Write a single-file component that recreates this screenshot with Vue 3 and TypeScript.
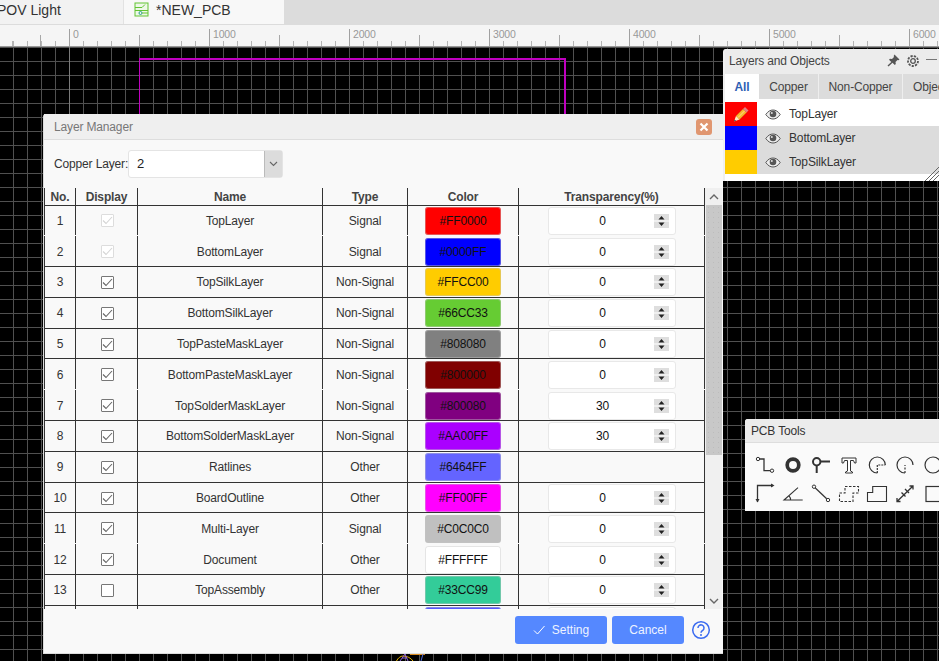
<script setup lang="ts">
interface Row { no: number; name: string; type: string; color: string; on: boolean; off?: boolean; tr: number | null; noline?: boolean; peek?: boolean }
const rows: Row[] = [
  { no: 1, name: 'TopLayer', type: 'Signal', color: '#FF0000', on: true, off: true, tr: 0, noline: true },
  { no: 2, name: 'BottomLayer', type: 'Signal', color: '#0000FF', on: true, off: true, tr: 0 },
  { no: 3, name: 'TopSilkLayer', type: 'Non-Signal', color: '#FFCC00', on: true, tr: 0 },
  { no: 4, name: 'BottomSilkLayer', type: 'Non-Signal', color: '#66CC33', on: true, tr: 0 },
  { no: 5, name: 'TopPasteMaskLayer', type: 'Non-Signal', color: '#808080', on: true, tr: 0 },
  { no: 6, name: 'BottomPasteMaskLayer', type: 'Non-Signal', color: '#800000', on: true, tr: 0, noline: true },
  { no: 7, name: 'TopSolderMaskLayer', type: 'Non-Signal', color: '#800080', on: true, tr: 30 },
  { no: 8, name: 'BottomSolderMaskLayer', type: 'Non-Signal', color: '#AA00FF', on: true, tr: 30 },
  { no: 9, name: 'Ratlines', type: 'Other', color: '#6464FF', on: true, tr: null },
  { no: 10, name: 'BoardOutline', type: 'Other', color: '#FF00FF', on: true, tr: 0 },
  { no: 11, name: 'Multi-Layer', type: 'Signal', color: '#C0C0C0', on: true, tr: 0, noline: true },
  { no: 12, name: 'Document', type: 'Other', color: '#FFFFFF', on: true, tr: 0 },
  { no: 13, name: 'TopAssembly', type: 'Other', color: '#33CC99', on: false, tr: 0 },
  { no: 14, name: '', type: '', color: '#5555FF', on: false, tr: 0, peek: true },
]
const rulerLabels = [0, 1000, 2000, 3000, 4000, 5000, 6000]
const panelLayers = [
  { name: 'TopLayer', color: '#FF0000', active: true },
  { name: 'BottomLayer', color: '#0000FF', active: false },
  { name: 'TopSilkLayer', color: '#FFCC00', active: false },
]
</script>

<template>
  <div class="app">
    <div class="tabs">
      <div class="tab first"><span class="pov">POV Light</span></div>
      <div class="tab second">
        <svg class="pcbicon" width="15" height="15" viewBox="0 0 15 15" fill="none">
          <rect x="1" y="1" width="13" height="13" fill="#eef8e8" stroke="#62c433" />
          <path d="M1 5.500h7l3-3M1 8.500h13" stroke="#62c433" />
          <circle cx="6.500" cy="11" r="1.500" stroke="#2a9d8f" />
          <path d="M8 11h6" stroke="#62c433" />
        </svg>
        <span>*NEW_PCB</span>
      </div>
    </div>
    <div class="ruler">
      <span v-for="(l, i) in rulerLabels" :key="l" class="rlabel" :style="{ left: 69 + i * 140 + 'px' }">{{ l }}</span>
    </div>
    <div class="canvas">
      <div class="origin"></div>
      <div class="outline"></div>
      <svg class="stray" width="40" height="8" viewBox="0 0 40 8" fill="none">
        <path d="M1.500 8C3 5 5.500 3 8 3c4 0 8 2 10 5" stroke="#e5b000" />
        <path d="M5 8l5-7 3 7M7 5h5" stroke="#8a5bd6" />
        <path d="M15 1.500h15" stroke="#d98a1e" />
        <path d="M28 1l-2 7" stroke="#4f6bd8" />
      </svg>

      <section class="dialog">
        <header class="dlg-title">
          <span>Layer Manager</span>
          <button class="close" aria-label="Close">
            <svg width="10" height="10" viewBox="0 0 10 10"><path d="M1.500 1.500l7 7M8.500 1.500l-7 7" stroke="#fff" stroke-width="2.200" /></svg>
          </button>
        </header>
        <div class="copper">
          <label>Copper Layer:</label>
          <div class="select">
            <span class="select-val">2</span>
            <span class="select-btn">
              <svg width="9" height="6" viewBox="0 0 9 6" fill="none"><path d="M1 1l3.500 3.500L8 1" stroke="#666" stroke-width="1.100" /></svg>
            </span>
          </div>
        </div>
        <div class="table-wrap">
          <div class="table">
            <div class="row head">
              <div class="cell">No.</div>
              <div class="cell">Display</div>
              <div class="cell">Name</div>
              <div class="cell">Type</div>
              <div class="cell">Color</div>
              <div class="cell last">Transparency(%)</div>
            </div>
            <div class="body">
              <div v-for="r in rows" :key="r.no" class="row" :class="{ noline: r.noline }">
                <div class="cell"><template v-if="!r.peek">{{ r.no }}</template></div>
                <div class="cell">
                  <span v-if="!r.peek" class="check" :class="{ disabled: r.off }">
                    <svg v-if="r.on" width="11" height="9" viewBox="0 0 11 9" fill="none"><path d="M1 4.500l3 3L10 1" :stroke="r.off ? '#d4d4d4' : '#666'" stroke-width="1.100" /></svg>
                  </span>
                </div>
                <div class="cell">{{ r.name }}</div>
                <div class="cell">{{ r.type }}</div>
                <div class="cell"><span class="swatch" :style="{ background: r.color }"><template v-if="!r.peek">{{ r.color }}</template></span></div>
                <div class="cell last">
                  <span v-if="r.tr !== null" class="num">
                    <template v-if="!r.peek">
                      <span class="num-val">{{ r.tr }}</span>
                      <span class="spin">
                        <svg width="15" height="14" viewBox="0 0 15 14"><rect width="15" height="14" fill="#dedede" /><rect y="6.500" width="15" height="1" fill="#fff" /><path d="M7.500 2l3 3.500h-6zM7.500 12l-3-3.500h6z" fill="#222" /></svg>
                      </span>
                    </template>
                  </span>
                </div>
              </div>
            </div>
          </div>
          <div class="scroll">
            <span class="arrow">
              <svg width="10" height="6" viewBox="0 0 10 6" fill="none"><path d="M1 5l4-4 4 4" stroke="#666" stroke-width="1.400" /></svg>
            </span>
            <div class="track"><div class="thumb"></div></div>
            <span class="arrow">
              <svg width="10" height="6" viewBox="0 0 10 6" fill="none"><path d="M1 1l4 4 4-4" stroke="#666" stroke-width="1.400" /></svg>
            </span>
          </div>
        </div>
        <footer class="dlg-foot">
          <button class="btn setting">
            <svg width="12" height="10" viewBox="0 0 12 10" fill="none"><path d="M1 5.500l3.500 3.500L11.500 1" stroke="#fff" /></svg>
            Setting
          </button>
          <button class="btn cancel">Cancel</button>
          <svg class="help" width="20" height="20" viewBox="0 0 20 20" fill="none">
            <circle cx="10" cy="10" r="8.300" stroke="#3b6bf0" stroke-width="1.500" />
            <path d="M7 8a3 3 0 1 1 4.800 2.300c-1.100.8-1.800 1.200-1.800 2.500" stroke="#3b6bf0" stroke-width="1.500" />
            <circle cx="10" cy="15" r="1" fill="#3b6bf0" />
          </svg>
        </footer>
      </section>

      <section class="panel layers">
        <header class="p-title">
          <span>Layers and Objects</span>
          <span class="p-icons">
            <svg width="13" height="13" viewBox="0 0 13 13"><path d="M7.500.5l5 5-1 .8-1-.3-2 2 .3 2-1 1-2.300-2.300L1.500 12.500.5 11.500l3.800-3.500L2 5.700l1-1 2 .3 2-2-.3-1z" fill="#555" /></svg>
            <svg width="14" height="14" viewBox="0 0 14 14" fill="none"><circle cx="7" cy="7" r="2.300" stroke="#555" stroke-width="1.300" /><circle cx="7" cy="7" r="5" stroke="#555" stroke-width="1.800" stroke-dasharray="2.200 1.200" /></svg>
            <svg width="11" height="13" viewBox="0 0 11 13"><rect y="5" width="11" height="1" fill="#777" /></svg>
          </span>
        </header>
        <div class="p-tabs">
          <span class="p-tab all">All</span>
          <span class="p-tab copper-t">Copper</span>
          <span class="p-tab noncopper">Non-Copper</span>
          <span class="p-tab objects">Objects</span>
        </div>
        <div v-for="l in panelLayers" :key="l.name" class="p-row" :class="{ active: l.active }">
          <span class="p-swatch" :style="{ background: l.color }">
            <svg v-if="l.active" width="18" height="18" viewBox="0 0 18 18">
              <path d="M4 11l7-7 3.500 3.500-7 7z" fill="#f9b52e" stroke="#c9801a" stroke-width=".5" />
              <path d="M6 12.500l7-7" stroke="#fde08a" />
              <path d="M11 4l2-2 3.500 3.500-2 2z" fill="#e77f7f" />
              <path d="M4 11l3.500 3.500L2 16.500z" fill="#ffe9c4" />
              <path d="M2 16.500l.7-2 1.300 1.300z" fill="#333" />
            </svg>
          </span>
          <svg class="eye" width="16" height="11" viewBox="0 0 16 11" fill="none">
            <path d="M.8 5.500C3 2.300 5.300 1 8 1s5 1.300 7.200 4.500C13 8.700 10.700 10 8 10S3 8.700.8 5.500z" fill="#eee" stroke="#555" />
            <circle cx="8" cy="5" r="3.300" fill="#555" />
            <circle cx="6.800" cy="4" r="1" fill="#ddd" />
          </svg>
          <span class="p-name">{{ l.name }}</span>
        </div>
        <div class="p-bottom">
          <svg class="grip" width="14" height="14" viewBox="0 0 14 14" fill="none"><path d="M14 0L0 14M14 4L4 14M14 8l-6 6" stroke="#666" /></svg>
        </div>
      </section>

      <section class="panel tools">
        <header class="t-title">PCB Tools</header>
        <div class="t-grid">
          <svg viewBox="0 0 20 20" fill="none" stroke="#333" stroke-width="1.300"><circle cx="3" cy="4" r="1.700" stroke-width="1" /><circle cx="17" cy="15.700" r="1.700" stroke-width="1" /><path d="M4.700 4H9v11.700h6.300" /></svg>
          <svg viewBox="0 0 20 20" fill="none"><circle cx="10" cy="10" r="5.800" stroke="#333" stroke-width="3.700" /></svg>
          <svg viewBox="0 0 20 20" fill="none" stroke="#333" stroke-width="2"><circle cx="5.700" cy="6.700" r="3.700" /><path d="M9.500 6.500H19M5.700 10.500V18" /></svg>
          <svg viewBox="0 0 20 20" fill="#fff" stroke="#333"><path d="M3 3h14v5h-1.500l-1-2.500H11.500V16l2 1v1h-7v-1l2-1V5.500H5.500l-1 2.500H3z" /></svg>
          <svg viewBox="0 0 20 20" fill="none" stroke="#333" stroke-width="1.200"><path d="M18.300 10a8 8 0 1 0-8 8" /><path d="M10.300 18V10h8" stroke-dasharray="2 1" /></svg>
          <svg viewBox="0 0 20 20" fill="none" stroke="#333" stroke-width="1.200"><path d="M18 10a8 8 0 1 0-8 8" /><path d="M10 18v-8" stroke-dasharray="2 1.500" /></svg>
          <svg viewBox="0 0 20 20" fill="none" stroke="#333" stroke-width="1.200"><circle cx="10" cy="10" r="8" /></svg>

          <svg viewBox="0 0 20 20" fill="#333" stroke="#333" stroke-width="1.300"><path d="M2.500 19V2.500H18" fill="none" /><path d="M.5 16l2 3.500 2-3.500zM16 .5l3.500 2-3.500 2z" stroke="none" /></svg>
          <svg viewBox="0 0 20 20" fill="none" stroke="#333" stroke-width="1.100"><path d="M15 4.700L1 17h18.700M6 12.800c1 1 1.600 2.500 1.600 4.200" /></svg>
          <svg viewBox="0 0 20 20" fill="none" stroke="#333"><circle cx="3" cy="3.700" r="1.700" /><circle cx="17" cy="17" r="1.700" /><path d="M4.300 5l11.400 10.800" stroke-width="1.200" /></svg>
          <svg viewBox="0 0 20 20" fill="none" stroke="#333" stroke-width="1.100"><path d="M6 3.500h13.500V10H14v8.500H.5V10H6z" stroke-dasharray="2.500 1.500" /></svg>
          <svg viewBox="0 0 20 20" fill="none" stroke="#333" stroke-width="1.100"><path d="M5.700 3.500h13.800v15H.5v-9h5.200z" /></svg>
          <svg viewBox="0 0 20 20" fill="none" stroke="#333" stroke-width="1.300"><path d="M2 18.500L18 3M2 15v3.500h3.500M14.500 3H18v3.500M6.500 9.500l4 4M10 6l4 4" /></svg>
          <svg viewBox="0 0 20 20" fill="none" stroke="#333" stroke-width="1.200"><rect x="3" y="3.500" width="20" height="15" /></svg>
        </div>
      </section>
    </div>
  </div>
</template>

<style>
html, body { margin: 0; background: #000; }
</style>

<style scoped>
.app {
  width: 939px;
  height: 661px;
  overflow: hidden;
  display: flex;
  flex-direction: column;
  font-family: "Liberation Sans", Arial, sans-serif;
  font-size: 12px;
  letter-spacing: -0.15px;
  color: #333;
  position: relative;
}
.tabs {
  height: 25px;
  flex: none;
  display: flex;
  background: #dcdcdc;
}
.tab {
  height: 24px;
  font-size: 14px;
  letter-spacing: 0;
  line-height: 21px;
  color: #333;
  box-sizing: border-box;
  display: flex;
  align-items: flex-start;
}
.first { width: 124px; background: #f2f2f2; border-right: 1px solid #e2e2e2; overflow: hidden; }
.pov { margin-left: -3px; white-space: nowrap; }
.second { width: 160px; background: #f8f8f8; padding-left: 10px; gap: 7px; }
.pcbicon { margin-top: 2px; flex: none; }
.ruler {
  height: 22px;
  flex: none;
  position: relative;
  background-color: #f5f5f5;
  background-image:
    repeating-linear-gradient(90deg, #a0a0a0 0 1px, transparent 1px 140px),
    repeating-linear-gradient(90deg, #a8a8a8 0 1px, transparent 1px 70px),
    repeating-linear-gradient(90deg, #b4b4b4 0 1px, transparent 1px 14px);
  background-size: 100% 17px, 100% 11px, 100% 5px;
  background-position: 69px 4px, 69px 10px, 13px 16px;
  background-repeat: repeat-x;
  border-bottom: 1px solid #999;
  box-sizing: border-box;
}
.rlabel {
  position: absolute;
  top: 3px;
  padding-left: 3px;
  font-size: 10.5px;
  letter-spacing: -0.2px;
  line-height: 13px;
  color: #999;
  margin-left: 1px;
}
.canvas {
  flex: 1;
  position: relative;
  background-color: #000;
  background-image:
    linear-gradient(90deg, #505050 1px, transparent 1px),
    linear-gradient(#505050 1px, transparent 1px);
  background-size: 14px 14px;
  background-position: 13px 0;
}
.origin {
  position: absolute;
  left: 69px;
  top: 0;
  width: 1px;
  height: 67px;
  background: #7a7a7a;
}
.outline {
  position: absolute;
  left: 139px;
  top: 11px;
  width: 427px;
  height: 80px;
  box-sizing: border-box;
  border-top: 2px solid #c000c0;
  border-left: 1px solid #c000c0;
  border-right: 2px solid #c000c0;
}
.stray { position: absolute; left: 395px; bottom: 0; }
.dialog {
  position: absolute;
  left: 43px;
  top: 67px;
  width: 680px;
  height: 540px;
  background: #f9f9f9;
  border-radius: 3px 3px 0 0;
  display: flex;
  flex-direction: column;
  box-sizing: border-box;
  border-left: 1px solid #ddd;
  border-bottom: 1px solid #ddd;
}
.dlg-title {
  height: 26px;
  flex: none;
  background: #efefef;
  border-bottom: 1px solid #ddd;
  box-sizing: border-box;
  display: flex;
  align-items: center;
  justify-content: space-between;
  padding: 1px 11px 0 10px;
  color: #777;
}
.close {
  width: 16px;
  height: 16px;
  padding: 0;
  border: none;
  border-radius: 3px;
  background: #e09670;
  display: flex;
  align-items: center;
  justify-content: center;
  margin-top: -1px;
}
.copper {
  height: 48px;
  flex: none;
  display: flex;
  align-items: flex-start;
  padding: 10px 0 0 10px;
  box-sizing: border-box;
}
.copper label { line-height: 28px; width: 74px; white-space: nowrap; }
.select {
  width: 155px;
  height: 28px;
  display: flex;
  box-sizing: border-box;
  border: 1px solid #e4e4e4;
  border-radius: 3px;
  background: #fff;
}
.select-val { flex: 1; padding-left: 8px; line-height: 26px; font-size: 13px; color: #222; }
.select-btn {
  width: 17px;
  display: flex;
  align-items: center;
  justify-content: center;
  background: #dcdcdc;
  border-left: 1px solid #bbb;
}
.table-wrap {
  height: 421px;
  flex: none;
  display: flex;
  overflow: hidden;
}
.table { width: 661px; flex: none; }
.body { height: 403.5px; overflow: hidden; }
.row {
  display: grid;
  grid-template-columns: 31px 62px 185px 85px 111px 187px;
  height: 30.8px;
  box-sizing: border-box;
  border-bottom: 1px solid #333;
}
.row.noline { border-bottom-color: transparent; }
.row.head { height: 17.5px; font-weight: 700; color: #444; }
.head .cell { padding-top: 1px; }
.cell {
  display: flex;
  align-items: center;
  justify-content: center;
  border-left: 1px solid #333;
  box-sizing: border-box;
  white-space: nowrap;
  min-width: 0;
}
.body .cell { padding-top: 1px; }
.cell.last { border-right: 1px solid #333; }
.check {
  width: 13px;
  height: 13px;
  margin-left: 1px;
  box-sizing: border-box;
  border: 1px solid #777;
  border-radius: 1px;
  background: #fff;
  display: flex;
  align-items: center;
  justify-content: center;
}
.check.disabled { border-color: #ddd; }
.swatch {
  width: 76px;
  height: 28px;
  flex: none;
  border: 1px solid rgba(255, 255, 255, 0.25);
  outline: 1px solid rgba(150, 150, 150, 0.25);
  outline-offset: -1px;
  border-radius: 3px;
  box-sizing: border-box;
  display: flex;
  align-items: center;
  justify-content: center;
  color: #111;
}
.num {
  width: 128px;
  height: 28px;
  flex: none;
  background: #fff;
  border: 1px solid #e8e8e8;
  border-radius: 3px;
  box-sizing: border-box;
  display: flex;
  align-items: center;
}
.num-val { width: 108px; text-align: center; color: #111; }
.spin { display: flex; margin-left: -3px; }
.scroll {
  width: 17px;
  display: flex;
  flex-direction: column;
  align-items: stretch;
}
.arrow { height: 17px; display: flex; align-items: center; justify-content: center; background: #f0f0f0; flex: none; }
.track { flex: 1; background: #f0f0f0; padding-left: 1px; }
.thumb {
  height: 250px;
  background-color: #c8c8c8;
  background-image: radial-gradient(#bcbcbc 0.6px, transparent 0.8px);
  background-size: 5px 5px;
}
.dlg-foot {
  flex: 1;
  display: flex;
  align-items: flex-start;
  justify-content: flex-end;
  padding: 7px 12px 0 0;
  gap: 5px;
}
.btn {
  height: 28px;
  border: none;
  border-radius: 3px;
  background: #5588ff;
  color: #eef3ff;
  font: 12px "Liberation Sans", Arial, sans-serif;
  display: flex;
  align-items: center;
  justify-content: center;
  gap: 7px;
  padding: 0;
}
.setting { width: 92px; }
.cancel { width: 72px; }
.help { margin: 4px 0 0 2px; }
.panel { position: absolute; background: #fafafa; border-radius: 3px 0 0 0; overflow: hidden; }
.layers {
  left: 723px;
  top: 2px;
  width: 216px;
  height: 132px;
  background: #fff;
  box-sizing: border-box;
  border-left: 2px solid #f0f0f0;
}
.p-title {
  height: 25px;
  background: #ececec;
  display: flex;
  align-items: center;
  justify-content: space-between;
  margin-left: -2px;
  padding: 0 0 2px 6px;
  box-sizing: border-box;
  color: #444;
}
.p-icons { display: flex; gap: 6px; align-items: center; padding-right: 2px; }
.p-tabs {
  height: 25px;
  display: flex;
  background: #fff;
  margin-bottom: 3px;
  white-space: nowrap;
  overflow: hidden;
}
.p-tab {
  line-height: 27px;
  text-align: center;
  background: #dcdcdc;
  flex: none;
  border-left: 1px solid #eee;
  color: #444;
  box-sizing: border-box;
}
.p-tab.all { width: 34px; background: #fff; color: #2f5fb3; font-weight: 700; border-left: 0; }
.p-tab.copper-t { width: 59px; border-left: 0; }
.p-tab.noncopper { width: 84px; }
.p-tab.objects { width: 60px; padding-left: 10px; text-align: left; }
.p-row {
  height: 24px;
  display: flex;
  align-items: center;
  background: #dcdcdc;
}
.p-row.active { background: #fff; }
.p-swatch {
  width: 32px;
  height: 24px;
  flex: none;
  display: flex;
  align-items: center;
  justify-content: center;
}
.eye { margin-left: 8px; flex: none; }
.p-name { margin-left: 8px; color: #333; }
.p-bottom { height: 7px; position: relative; }
.grip { position: absolute; right: 0; bottom: 0; }
.tools {
  left: 745px;
  top: 372px;
  width: 194px;
  height: 92px;
}
.t-title {
  height: 24px;
  line-height: 24px;
  background: #ececec;
  border-bottom: 1px solid #ddd;
  box-sizing: border-box;
  padding-left: 6px;
  color: #333;
}
.t-grid {
  display: grid;
  grid-template-columns: repeat(7, 20px);
  grid-auto-rows: 20px;
  column-gap: 8px;
  row-gap: 8px;
  padding: 12px 0 0 10px;
}
.t-grid svg { width: 20px; height: 20px; display: block; overflow: visible; }
</style>
